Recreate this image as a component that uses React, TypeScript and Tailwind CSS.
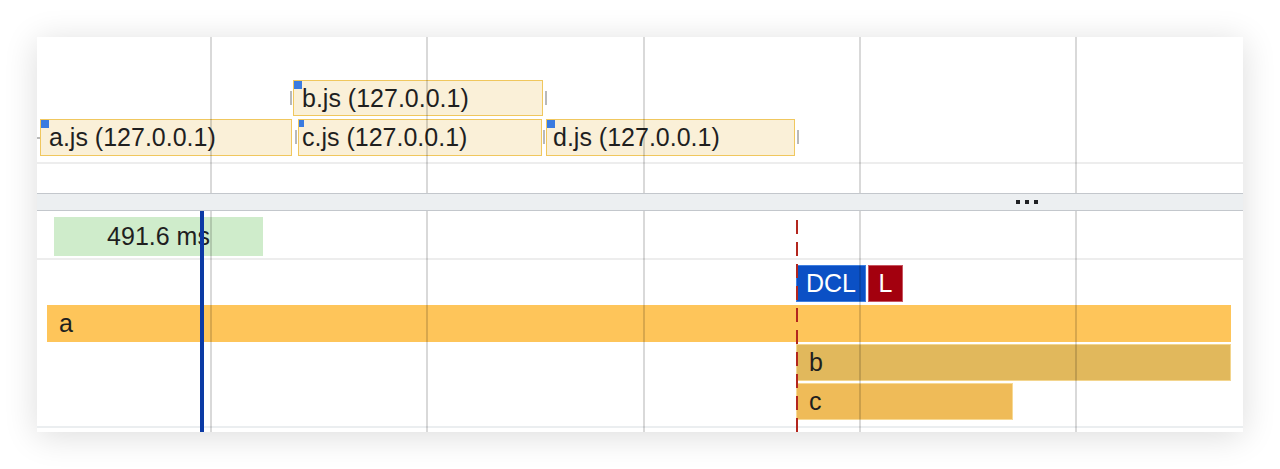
import React from 'react';

const gridX = ['left-[173px]', 'left-[389px]', 'left-[606px]', 'left-[822px]', 'left-[1038px]'];

interface NetItemProps {
  label: string;
  pos: string;
  marker: string;
  pad: string;
  leftTick?: boolean;
  rightTick?: boolean;
}

const NetItem: React.FC<NetItemProps> = ({ label, pos, marker, pad, leftTick, rightTick }) => (
  <div className={`absolute ${pos}`}>
    <div className={`relative h-full w-full bg-[#faf0d8] border border-[#f0c75e] flex items-center ${pad} text-[25px] leading-none text-[#1f1f1f]`}>
      <div className={`absolute left-0 top-0 bg-[#3a7be0] ${marker}`} />
      {label}
    </div>
    {leftTick && <div className="absolute -left-[3px] top-[11px] w-[2px] h-[14px] bg-[#b9b9b9]" />}
    {rightTick && <div className="absolute -right-[4px] top-[11px] w-[2px] h-[14px] bg-[#b9b9b9]" />}
  </div>
);

const GridLines: React.FC = () => (
  <>
    {gridX.map((x) => (
      <div key={x} className={`absolute top-0 bottom-0 ${x} w-[2px] bg-black/15 z-20 pointer-events-none`} />
    ))}
  </>
);

export default function App() {
  return (
    <div className="w-[1280px] h-[469px] bg-white pt-[37px] pl-[37px] font-['Liberation_Sans',Arial,sans-serif]">
      <div className="w-[1206px] h-[395px] bg-white flex flex-col shadow-[0_4px_32px_rgba(0,0,0,0.14)]">
        {/* network track */}
        <div className="relative h-[156px] shrink-0">
          <div className="absolute left-0 right-0 top-[125px] h-[2px] bg-[#ededed]" />
          <GridLines />
          <div className="absolute left-0 top-[100px] w-[3px] h-[2px] bg-[#b9b9b9]" />
          <NetItem label="b.js (127.0.0.1)" pos="left-[256px] top-[43px] w-[250px] h-[36px]" marker="w-[8px] h-[8px]" pad="pl-[8px]" leftTick rightTick />
          <NetItem label="a.js (127.0.0.1)" pos="left-[3px] top-[82px] w-[252px] h-[37px]" marker="w-[8px] h-[8px]" pad="pl-[8px]" />
          <NetItem label="c.js (127.0.0.1)" pos="left-[261px] top-[82px] w-[244px] h-[37px]" marker="w-[5px] h-[7px]" pad="pl-[3px]" leftTick />
          <NetItem label="d.js (127.0.0.1)" pos="left-[509px] top-[82px] w-[249px] h-[37px]" marker="w-[8px] h-[8px]" pad="pl-[6px]" leftTick rightTick />
        </div>

        {/* section header */}
        <div className="h-[18px] shrink-0 bg-[#eceff1] border-y border-[#c3c7cc] flex items-center justify-end pr-[205px]">
          <div className="flex gap-[5px]">
            <div className="w-[4px] h-[4px] bg-[#202124]" />
            <div className="w-[4px] h-[4px] bg-[#202124]" />
            <div className="w-[4px] h-[4px] bg-[#202124]" />
          </div>
        </div>

        {/* main track */}
        <div className="relative flex-1 flex flex-col text-[25px] leading-none text-[#1f1f1f]">
          <GridLines />
          <div className="h-[49px] shrink-0 border-b-2 border-[#ededed] pt-[6px] pl-[17px]">
            <div className="w-[209px] h-[39px] bg-[#cfeccb] flex items-center justify-center">491.6 ms</div>
          </div>
          <div className="flex gap-[2px] pl-[759px] pt-[5px] text-white">
            <div className="h-[37px] w-[70px] bg-[#0b50c5] border border-[#3f7fe0] flex items-center justify-center">DCL</div>
            <div className="h-[37px] w-[35px] bg-[#a3000e] border border-[#c85560] flex items-center justify-center">L</div>
          </div>
          <div className="flex flex-col gap-[2px] pt-[3px]">
            <div className="ml-[10px] w-[1184px] h-[37px] bg-[#fec55a] flex items-center pl-[12px]">a</div>
            <div className="ml-[759px] w-[435px] h-[37px] bg-[#e1b85c] border border-[#f3d58e] flex items-center pl-[12px]">b</div>
            <div className="ml-[759px] w-[217px] h-[37px] bg-[#efbb58] border border-[#f7d994] flex items-center pl-[12px]">c</div>
          </div>
          <div className="mt-auto mb-[4px] h-[2px] bg-[#ebeef0]" />
          {/* DCL marker line */}
          <div className="absolute left-[759px] top-[9px] bottom-0 w-[2px] z-30 bg-[repeating-linear-gradient(to_bottom,#b3261e_0px,#b3261e_14px,transparent_14px,transparent_22px)]" />
          {/* current time cursor */}
          <div className="absolute left-[163px] top-0 bottom-0 w-[4px] bg-[#0b3aa5] z-30" />
        </div>
      </div>
    </div>
  );
}
